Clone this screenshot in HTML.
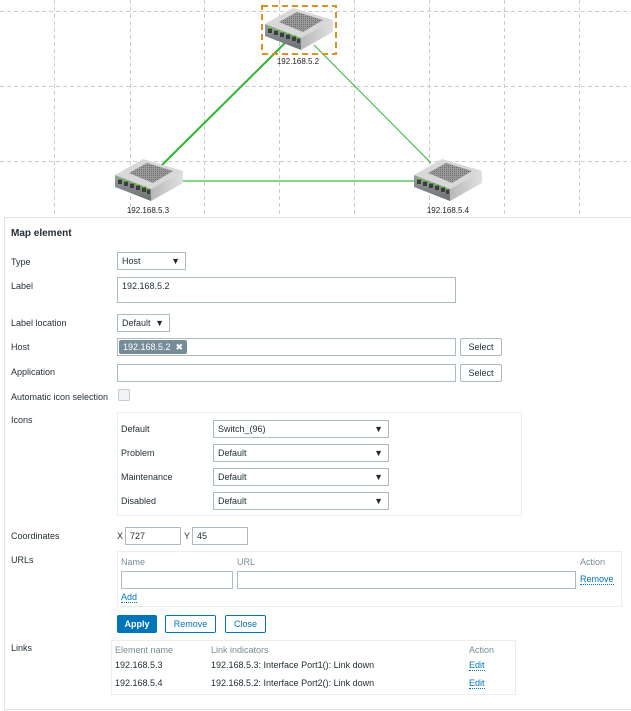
<!DOCTYPE html>
<html><head><meta charset="utf-8"><style>
*{box-sizing:border-box;margin:0;padding:0}
body{width:631px;height:711px;background:#fff;font-family:"Liberation Sans",Arial,sans-serif;font-size:9px;color:#1f2c33;position:relative;overflow:hidden}
.a{position:absolute;white-space:nowrap}
.in{position:absolute;border:1px solid #acbbc2;background:#fff;height:18px;padding:3px 4px;font-size:9px;line-height:10px}
.sel:after{content:"▼";position:absolute;right:5px;top:3px;font-size:9px}
.btn{position:absolute;border:1px solid #0275b8;color:#0275b8;background:#fff;height:18px;font-size:9px;line-height:16px;text-align:center;border-radius:2px}
.box{position:absolute;border:1px solid #ebeef0}
.lk{color:#0275b8;border-bottom:1px dotted #0275b8}
.g{color:#768d99}
</style></head><body>
<svg class="a" style="left:0;top:0" width="631" height="217">
<defs>
<pattern id="h" width="2" height="2" patternUnits="userSpaceOnUse"><rect width="2" height="2" fill="#9a9a9a"/><rect width="1" height="1" fill="#6e6e6e"/></pattern>
<linearGradient id="fr" x1="0" y1="0" x2="0" y2="1"><stop offset="0" stop-color="#9a9fa1"/><stop offset="1" stop-color="#6a6f71"/></linearGradient>
<linearGradient id="sd" x1="0" y1="0" x2="1" y2="0"><stop offset="0" stop-color="#b8b8b8"/><stop offset="1" stop-color="#e0e0e0"/></linearGradient>
<g id="sw">
<polygon points="0,16 28,0 68,12 36,30" fill="#d8d8d8"/>
<polygon points="14,14 32,4 58,12 38,24" fill="url(#h)"/>
<polygon points="0,16 36,30 36,42 0,28" fill="url(#fr)"/>
<polygon points="36,30 68,12 68,24 36,42" fill="url(#sd)"/>
<g fill="#3c3c3c"><rect x="3" y="19" width="4" height="6"/><rect x="9" y="21" width="4" height="6"/><rect x="15" y="23" width="4" height="6"/><rect x="21" y="25" width="4" height="6"/><rect x="27" y="27" width="4" height="6"/><rect x="32" y="29" width="3" height="6"/></g>
<g fill="#6fd64a"><rect x="3" y="19" width="4" height="1.5"/><rect x="9" y="21" width="4" height="1.5"/><rect x="15" y="23" width="4" height="1.5"/><rect x="21" y="25" width="4" height="1.5"/><rect x="27" y="27" width="4" height="1.5"/><rect x="32" y="29" width="3" height="1.5"/></g>
</g></defs>
<g stroke="#ccc" stroke-dasharray="4,3" stroke-width="1">
<line x1="54.5" y1="0" x2="54.5" y2="217"/><line x1="130.5" y1="0" x2="130.5" y2="217"/><line x1="204.5" y1="0" x2="204.5" y2="217"/><line x1="279.5" y1="0" x2="279.5" y2="217"/><line x1="354.5" y1="0" x2="354.5" y2="217"/><line x1="429.5" y1="0" x2="429.5" y2="217"/><line x1="504.5" y1="0" x2="504.5" y2="217"/><line x1="579.5" y1="0" x2="579.5" y2="217"/>
<line x1="0" y1="11.5" x2="631" y2="11.5"/><line x1="0" y1="86.5" x2="631" y2="86.5"/><line x1="0" y1="161.5" x2="631" y2="161.5"/>
</g>
<line x1="288" y1="40" x2="161" y2="166" stroke="#2db52d" stroke-width="2"/>
<line x1="314" y1="45" x2="431" y2="163" stroke="#2db52d" stroke-width="1"/>
<line x1="182" y1="181" x2="416" y2="181" stroke="#5cc85c" stroke-width="1.5"/>
<use href="#sw" x="265" y="8"/>
<use href="#sw" x="115" y="159"/>
<use href="#sw" x="414" y="159"/>
<rect x="262" y="6" width="74" height="48" fill="none" stroke="#d9931f" stroke-width="2" stroke-dasharray="6,4"/>
<g font-size="8" font-family="Liberation Sans,Arial" fill="#222" text-anchor="middle"><text x="298" y="64">192.168.5.2</text><text x="148" y="213">192.168.5.3</text><text x="448" y="213">192.168.5.4</text></g>
</svg>
<div class="a" style="left:4px;top:217px;width:630px;height:493px;border:1px solid #dfe4e7;background:#fff"></div>
<div class="a" style="left:11px;top:228px;font-size:10px;font-weight:bold">Map element</div>
<div class="a" style="left:11px;top:257px">Type</div>
<div class="in sel" style="left:117px;top:252px;width:69px">Host</div>
<div class="a" style="left:11px;top:281px">Label</div>
<div class="in" style="left:117px;top:277px;width:339px;height:26px">192.168.5.2</div>
<div class="a" style="left:11px;top:318px">Label location</div>
<div class="in sel" style="left:117px;top:314px;width:53px">Default</div>
<div class="a" style="left:11px;top:342px">Host</div>
<div class="in" style="left:117px;top:338px;width:339px;padding:1px"><span style="display:inline-block;background:#768d99;color:#fff;padding:2px 4px;height:14px;border-radius:2px">192.168.5.2 &nbsp;✖</span></div>
<div class="btn" style="left:460px;top:338px;width:42px;border-color:#acbbc2;color:#1f2c33">Select</div>
<div class="a" style="left:11px;top:367px">Application</div>
<div class="in" style="left:117px;top:364px;width:339px"></div>
<div class="btn" style="left:460px;top:364px;width:42px;border-color:#acbbc2;color:#1f2c33">Select</div>
<div class="a" style="left:11px;top:392px">Automatic icon selection</div>
<div class="a" style="left:118px;top:389px;width:12px;height:12px;border:1px solid #c4cdd1;border-radius:2px;background:#f2f4f5"></div>
<div class="a" style="left:11px;top:415px">Icons</div>
<div class="box" style="left:117px;top:412px;width:405px;height:104px"></div>
<div class="a" style="left:121px;top:424px">Default</div><div class="in sel" style="left:213px;top:420px;width:176px">Switch_(96)</div>
<div class="a" style="left:121px;top:448px">Problem</div><div class="in sel" style="left:213px;top:444px;width:176px">Default</div>
<div class="a" style="left:121px;top:472px">Maintenance</div><div class="in sel" style="left:213px;top:468px;width:176px">Default</div>
<div class="a" style="left:121px;top:496px">Disabled</div><div class="in sel" style="left:213px;top:492px;width:176px">Default</div>
<div class="a" style="left:11px;top:531px">Coordinates</div>
<div class="a" style="left:117px;top:531px">X</div><div class="in" style="left:125px;top:527px;width:56px">727</div>
<div class="a" style="left:184px;top:531px">Y</div><div class="in" style="left:192px;top:527px;width:56px">45</div>
<div class="a" style="left:11px;top:555px">URLs</div>
<div class="box" style="left:117px;top:551px;width:505px;height:56px"></div>
<div class="a g" style="left:121px;top:557px">Name</div><div class="a g" style="left:237px;top:557px">URL</div><div class="a g" style="left:580px;top:557px">Action</div>
<div class="in" style="left:121px;top:571px;width:112px"></div>
<div class="in" style="left:237px;top:571px;width:339px"></div>
<div class="a lk" style="left:580px;top:574px">Remove</div>
<div class="a lk" style="left:121px;top:592px">Add</div>
<div class="btn" style="left:117px;top:615px;width:40px;background:#0275b8;color:#fff;font-weight:bold">Apply</div>
<div class="btn" style="left:165px;top:615px;width:51px">Remove</div>
<div class="btn" style="left:225px;top:615px;width:41px">Close</div>
<div class="a" style="left:11px;top:643px">Links</div>
<div class="box" style="left:111px;top:640px;width:405px;height:55px"></div>
<div class="a g" style="left:115px;top:645px">Element name</div><div class="a g" style="left:211px;top:645px">Link indicators</div><div class="a g" style="left:469px;top:645px">Action</div>
<div class="a" style="left:115px;top:660px">192.168.5.3</div><div class="a" style="left:211px;top:660px">192.168.5.3: Interface Port1(): Link down</div><div class="a lk" style="left:469px;top:660px">Edit</div>
<div class="a" style="left:115px;top:678px">192.168.5.4</div><div class="a" style="left:211px;top:678px">192.168.5.2: Interface Port2(): Link down</div><div class="a lk" style="left:469px;top:678px">Edit</div>
</body></html>
